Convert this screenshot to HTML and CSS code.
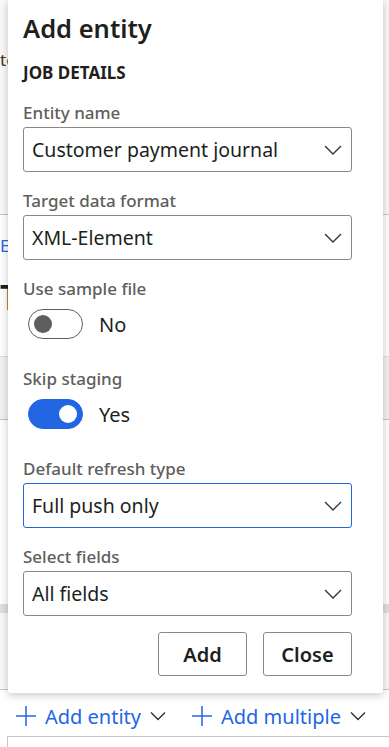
FILE: index.html
```html
<!DOCTYPE html>
<html lang="en">
<head>
  <meta charset="UTF-8">
  <meta name="viewport" content="width=device-width, initial-scale=1.0">
  <title>Add entity</title>
  <link rel="stylesheet" href="styles.css">
</head>
<body>
  <div class="page">
    <div class="page-top">
      <p class="crumb clip">templates</p>
    </div>
    <div class="page-job">
      <a class="job-link clip">Export</a>
      <h2 class="job-title clip">Test export</h2>
    </div>
    <div class="page-rows">
      <div class="row-a"></div>
      <div class="row-b"></div>
      <div class="row-band"></div>
      <div class="row-c"></div>
    </div>

    <div class="toolbar">
      <span class="tool">
        <svg class="plus" viewBox="0 0 22 22"><path d="M11 1v20M1 11h20"/></svg>
        <span class="tool-text">Add entity</span>
        <svg class="caret" viewBox="0 0 16 10"><path d="M1 1.5l7 7 7-7"/></svg>
      </span>
      <span class="tool">
        <svg class="plus" viewBox="0 0 22 22"><path d="M11 1v20M1 11h20"/></svg>
        <span class="tool-text">Add multiple</span>
        <svg class="caret" viewBox="0 0 16 10"><path d="M1 1.5l7 7 7-7"/></svg>
      </span>
      <span class="tool">
        <svg class="plus" viewBox="0 0 22 22"><path d="M11 1v20M1 11h20"/></svg>
      </span>
    </div>
    <div class="grid-box"></div>
  </div>

  <div class="panel">
    <h1 class="panel-title">Add entity</h1>
    <div class="section-title">JOB DETAILS</div>

    <div class="field">
      <label>Entity name</label>
      <div class="select">
        <span>Customer payment journal</span>
        <svg class="chevron" viewBox="0 0 18 10"><path d="M1 1l8 8 8-8"/></svg>
      </div>
    </div>

    <div class="field">
      <label>Target data format</label>
      <div class="select">
        <span>XML-Element</span>
        <svg class="chevron" viewBox="0 0 18 10"><path d="M1 1l8 8 8-8"/></svg>
      </div>
    </div>

    <div class="field">
      <label>Use sample file</label>
      <div class="toggle-row">
        <span class="toggle"><span class="knob"></span></span>
        <span class="toggle-text">No</span>
      </div>
    </div>

    <div class="field">
      <label>Skip staging</label>
      <div class="toggle-row">
        <span class="toggle on"><span class="knob"></span></span>
        <span class="toggle-text">Yes</span>
      </div>
    </div>

    <div class="field">
      <label>Default refresh type</label>
      <div class="select focused">
        <span>Full push only</span>
        <svg class="chevron" viewBox="0 0 18 10"><path d="M1 1l8 8 8-8"/></svg>
      </div>
    </div>

    <div class="field">
      <label>Select fields</label>
      <div class="select">
        <span>All fields</span>
        <svg class="chevron" viewBox="0 0 18 10"><path d="M1 1l8 8 8-8"/></svg>
      </div>
    </div>

    <div class="actions">
      <button class="btn">Add</button>
      <button class="btn">Close</button>
    </div>
  </div>
</body>
</html>
```

FILE: styles.css
```css
* {
  margin: 0;
  padding: 0;
  box-sizing: border-box;
}

body {
  font-family: "Noto Sans", "Open Sans", sans-serif;
  background: #ffffff;
  color: #201f1e;
  width: 389px;
  height: 747px;
  overflow: hidden;
  position: relative;
}

/* page behind the flyout, only its edges show */

.clip {
  width: 8px;
  overflow: hidden;
  white-space: nowrap;
}

.page-top {
  height: 215px;
  background: #faf9f8;
  border-bottom: 1px solid #c8c6c4;
  padding-top: 48px;
}

.crumb {
  font-size: 17px;
  color: #323130;
}

.page-job {
  height: 142px;
  background: #ffffff;
  border-bottom: 1px solid #e1dfdd;
  padding-top: 20px;
}

.job-link {
  display: block;
  color: #2266e3;
  font-size: 17px;
  line-height: 22px;
}

.job-title {
  margin-top: 20px;
  font-size: 34px;
  font-weight: 600;
  line-height: 40px;
}

.row-a {
  height: 63px;
  border-bottom: 1px solid #c8c6c4;
  background: #f3f2f1;
}

.row-b {
  height: 184px;
  background: #ffffff;
}

.row-band {
  height: 9px;
  background: #e1dfdd;
}

.row-c {
  height: 77px;
  border-bottom: 1px solid #c8c6c4;
  background: #faf9f8;
}

.toolbar {
  display: flex;
  align-items: center;
  gap: 25px;
  height: 46px;
  padding-top: 6px;
  padding-left: 15px;
  white-space: nowrap;
}

.tool {
  display: flex;
  align-items: center;
  flex-shrink: 0;
}

.plus {
  width: 22px;
  height: 22px;
  fill: none;
  stroke: #2266e3;
  stroke-width: 1.5;
}

.tool-text {
  margin-left: 8px;
  color: #2266e3;
  font-size: 20px;
}

.caret {
  width: 16px;
  height: 10px;
  margin-left: 9px;
  fill: none;
  stroke: #323130;
  stroke-width: 1.4;
}

.grid-box {
  margin-left: 7px;
  height: 40px;
  border-top: 1px solid #c8c6c4;
  border-left: 1px solid #c8c6c4;
}

/* flyout */

.panel {
  position: absolute;
  top: 0;
  left: 8px;
  width: 375px;
  height: 693px;
  background: #ffffff;
  border-radius: 0 0 3px 3px;
  box-shadow: 0 0 8px rgba(0, 0, 0, 0.14), 0 4px 10px rgba(0, 0, 0, 0.1);
  padding: 10px 31px 16px 15px;
}

.panel-title {
  font-size: 25.5px;
  font-weight: 600;
  line-height: 36px;
}

.section-title {
  margin-top: 15px;
  font-size: 17px;
  font-weight: 700;
  line-height: 24px;
}

.field {
  margin-top: 17px;
}

.section-title + .field {
  margin-top: 16px;
}

.field label {
  display: block;
  color: #605e5c;
  font-size: 17px;
  font-weight: 500;
  line-height: 24px;
  margin-bottom: 2px;
}

.select {
  display: flex;
  align-items: center;
  justify-content: space-between;
  height: 45px;
  border: 1px solid #8a8886;
  border-radius: 3px;
  padding: 0 9px 0 8px;
  font-size: 19.5px;
}

.select.focused {
  border-color: #2266e3;
}

.chevron {
  width: 18px;
  height: 10px;
  fill: none;
  stroke: #323130;
  stroke-width: 1.3;
}

.toggle-row {
  display: flex;
  align-items: center;
  margin-top: 8px;
  margin-left: 5px;
  padding-bottom: 11px;
}

.toggle {
  position: relative;
  width: 55px;
  height: 30px;
  border: 1px solid #605e5c;
  border-radius: 15px;
  background: #ffffff;
}

.knob {
  position: absolute;
  top: 5px;
  left: 5px;
  width: 18px;
  height: 18px;
  border-radius: 50%;
  background: #605e5c;
}

.toggle.on {
  background: #2266e3;
  border-color: #2266e3;
}

.toggle.on .knob {
  left: auto;
  right: 5px;
  background: #ffffff;
}

.toggle-text {
  margin-left: 16px;
  font-size: 20px;
}

.actions {
  display: flex;
  justify-content: flex-end;
  gap: 16px;
  margin-top: 16px;
}

.btn {
  width: 89px;
  height: 44px;
  background: #ffffff;
  border: 1px solid #8a8886;
  border-radius: 3px;
  font-family: inherit;
  font-size: 20px;
  font-weight: 600;
  color: #201f1e;
}
```
